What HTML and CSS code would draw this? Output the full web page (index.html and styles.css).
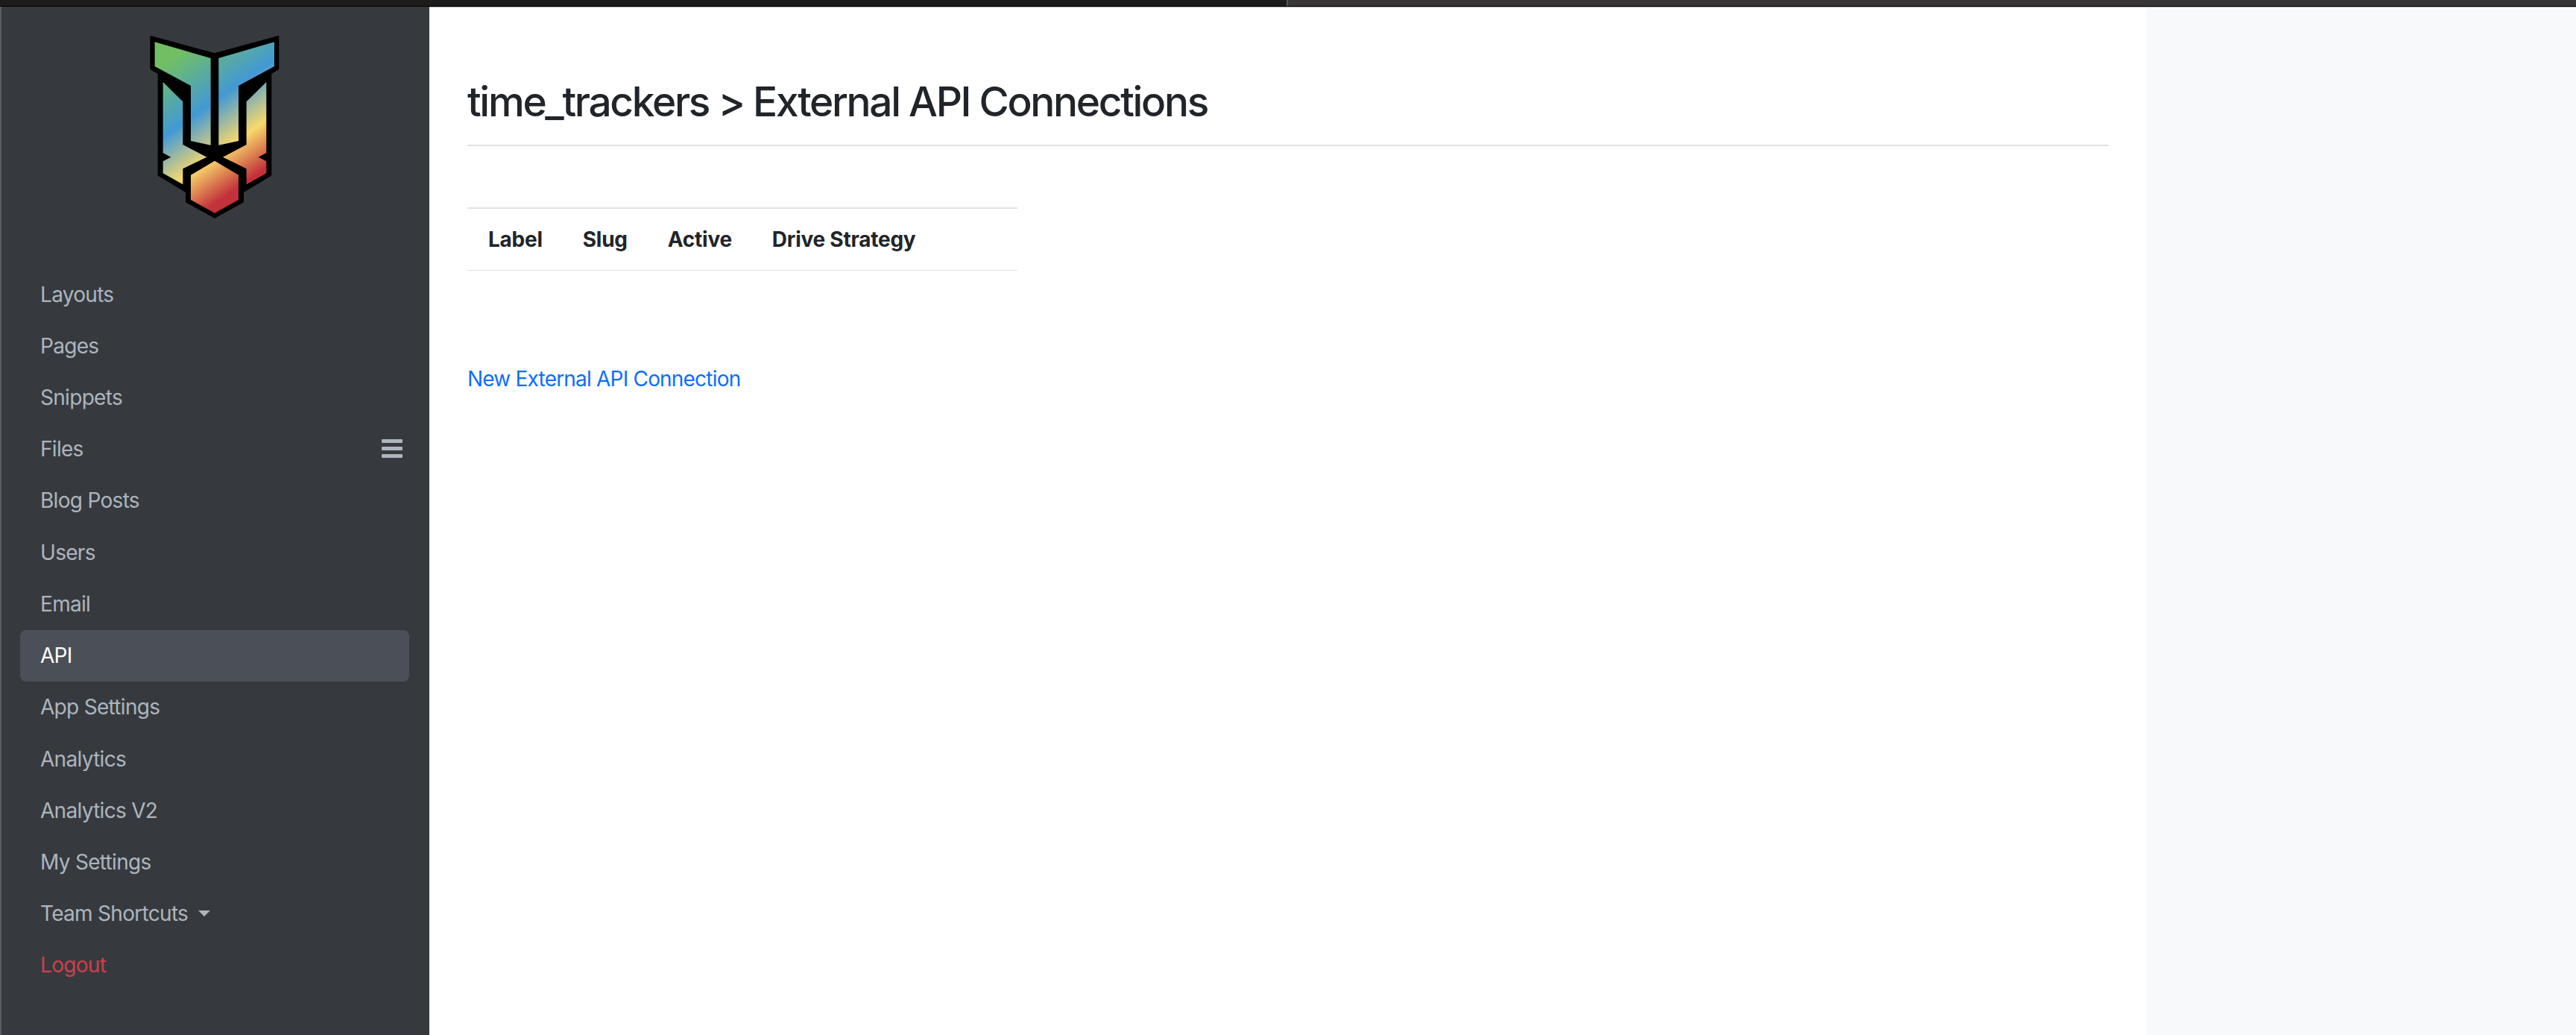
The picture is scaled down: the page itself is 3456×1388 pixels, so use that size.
FILE: index.html
```html
<!DOCTYPE html>
<html lang="en">
<head>
  <meta charset="UTF-8" />
  <title>External API Connections</title>
  <link rel="stylesheet" href="styles.css">
</head>
<body>
  <div class="topbar">
    <div class="topbar-tab"></div>
    <div class="topbar-rest"></div>
  </div>
  <div class="layout">
    <aside class="sidebar">
      <div class="logo">
        <svg width="240" height="280" viewBox="0 0 720 840">
          <defs>
            <linearGradient id="logoGrad" gradientUnits="userSpaceOnUse" x1="130" y1="185" x2="460" y2="658">
              <stop offset="0" stop-color="#72bf63"/>
              <stop offset="0.416" stop-color="#4299d5"/>
              <stop offset="0.73" stop-color="#f9d96c"/>
              <stop offset="1" stop-color="#c2323a"/>
            </linearGradient>
          </defs>
          <path fill="#000" stroke="#000" stroke-width="6" stroke-linejoin="round" d="M97 60 L354 130 L610 60 L610 190 L580 208 L580 618 L468 685 L468 725 L354 788 L240 725 L240 685 L128 618 L128 208 L97 190 Z"/>
          <g fill="url(#logoGrad)">
            <path d="M113 82 L338 147 L338 497 L258 480 L258 258 L113 180 Z"/>
            <path d="M370 147 L594 82 L594 180 L450 258 L450 480 L370 497 Z"/>
            <path d="M146 243 L226 322 L226 495 L322 545 L226 592 L226 655 L146 610 L146 562 L178 545 L146 528 Z"/>
            <path d="M562 243 L562 528 L530 545 L562 562 L562 610 L482 655 L482 592 L387 545 L482 495 L482 322 Z"/>
            <path d="M354 560 L450 617 L450 717 L354 770 L258 717 L258 617 Z"/>
          </g>
        </svg>
      </div>
      <nav class="nav">
        <a class="nav-link" href="#">Layouts</a>
        <a class="nav-link" href="#">Pages</a>
        <a class="nav-link" href="#">Snippets</a>
        <a class="nav-link" href="#">Files <span class="burger"><i></i><i></i><i></i></span></a>
        <a class="nav-link" href="#">Blog Posts</a>
        <a class="nav-link" href="#">Users</a>
        <a class="nav-link" href="#">Email</a>
        <a class="nav-link active" href="#">API</a>
        <a class="nav-link" href="#">App Settings</a>
        <a class="nav-link" href="#">Analytics</a>
        <a class="nav-link" href="#">Analytics V2</a>
        <a class="nav-link" href="#">My Settings</a>
        <a class="nav-link" href="#">Team Shortcuts<span class="caret"></span></a>
        <a class="nav-link logout" href="#">Logout</a>
      </nav>
    </aside>
    <main class="content">
      <h1 class="page-title">time_trackers &gt; External API Connections</h1>
      <table class="conn-table">
        <thead>
          <tr>
            <th>Label</th>
            <th>Slug</th>
            <th>Active</th>
            <th>Drive Strategy</th>
            <th class="filler"></th>
          </tr>
        </thead>
      </table>
      <a class="new-link" href="#">New External API Connection</a>
    </main>
    <div class="side-panel"></div>
  </div>
</body>
</html>
```

FILE: styles.css
```css
* { box-sizing: border-box; }
html, body { height: 100%; }
body {
  margin: 0;
  height: 100vh;
  overflow: hidden;
  display: flex;
  flex-direction: column;
  font-family: Inter, "Liberation Sans", sans-serif;
  font-size: 28px;
  color: #212529;
  background: #fff;
}
a { text-decoration: none; }

.topbar {
  display: flex;
  height: 9px;
  flex: none;
  border-bottom: 1px solid #000;
}
.topbar-tab {
  width: 1728px;
  background: #1c1c1c;
  border-right: 2px solid #555;
}
.topbar-rest {
  flex: 1;
  background: #383636;
}

.layout {
  flex: 1;
  display: flex;
  min-height: 0;
  border-top: 1px solid #b4b4b4;
}

.sidebar {
  width: 576px;
  flex: none;
  background: #363a3f;
  border-left: 2px solid #5a5d62;
  margin-top: -1px;
}
.logo {
  display: flex;
  justify-content: center;
  height: 351px;
  padding: 20px 0 0 2px;
}
.nav {
  display: flex;
  flex-direction: column;
  padding: 0 25px;
  width: 572px;
}
.nav-link {
  display: flex;
  align-items: center;
  justify-content: space-between;
  height: 69.23px;
  padding: 0 9px 0 27px;
  border-radius: 8px;
  color: #adb5bd;
  font-size: 28px;
  letter-spacing: -0.7px;
}
.nav-link.active {
  background: #4b4f57;
  color: #fff;
}
.nav-link.logout { color: #cf3f4a; }

.burger {
  display: flex;
  flex-direction: column;
  gap: 5px;
  width: 28px;
  margin-top: -2px;
}
.burger i {
  display: block;
  height: 5px;
  background: #adb5bd;
  border-radius: 1px;
}
.caret {
  width: 0;
  height: 0;
  margin-left: 14px;
  margin-right: auto;
  border-top: 8px solid #adb5bd;
  border-left: 8px solid transparent;
  border-right: 8px solid transparent;
}

.content {
  flex: 1;
  padding: 0 51px;
}
.page-title {
  margin: 0;
  height: 186px;
  padding-top: 92px;
  border-bottom: 2px solid #dee2e6;
  font-size: 55px;
  font-weight: 500;
  line-height: 68px;
  letter-spacing: -2.35px;
}
.conn-table {
  width: 738px;
  margin-top: 82px;
  border-collapse: collapse;
  border-top: 2px solid #dee2e6;
}
.conn-table th {
  height: 83px;
  padding: 0 26px 0 28px;
  font-size: 28px;
  font-weight: 700;
  text-align: left;
  white-space: nowrap;
  letter-spacing: -0.25px;
  border-bottom: 1px solid #dee2e6;
}
.conn-table th.filler { width: 100%; padding: 0; }
.new-link {
  display: block;
  margin-top: 124px;
  color: #0d6efd;
  font-size: 28px;
  line-height: 42px;
  letter-spacing: -0.8px;
}

.side-panel {
  width: 576px;
  flex: none;
  background: #f8f9fa;
}
```
